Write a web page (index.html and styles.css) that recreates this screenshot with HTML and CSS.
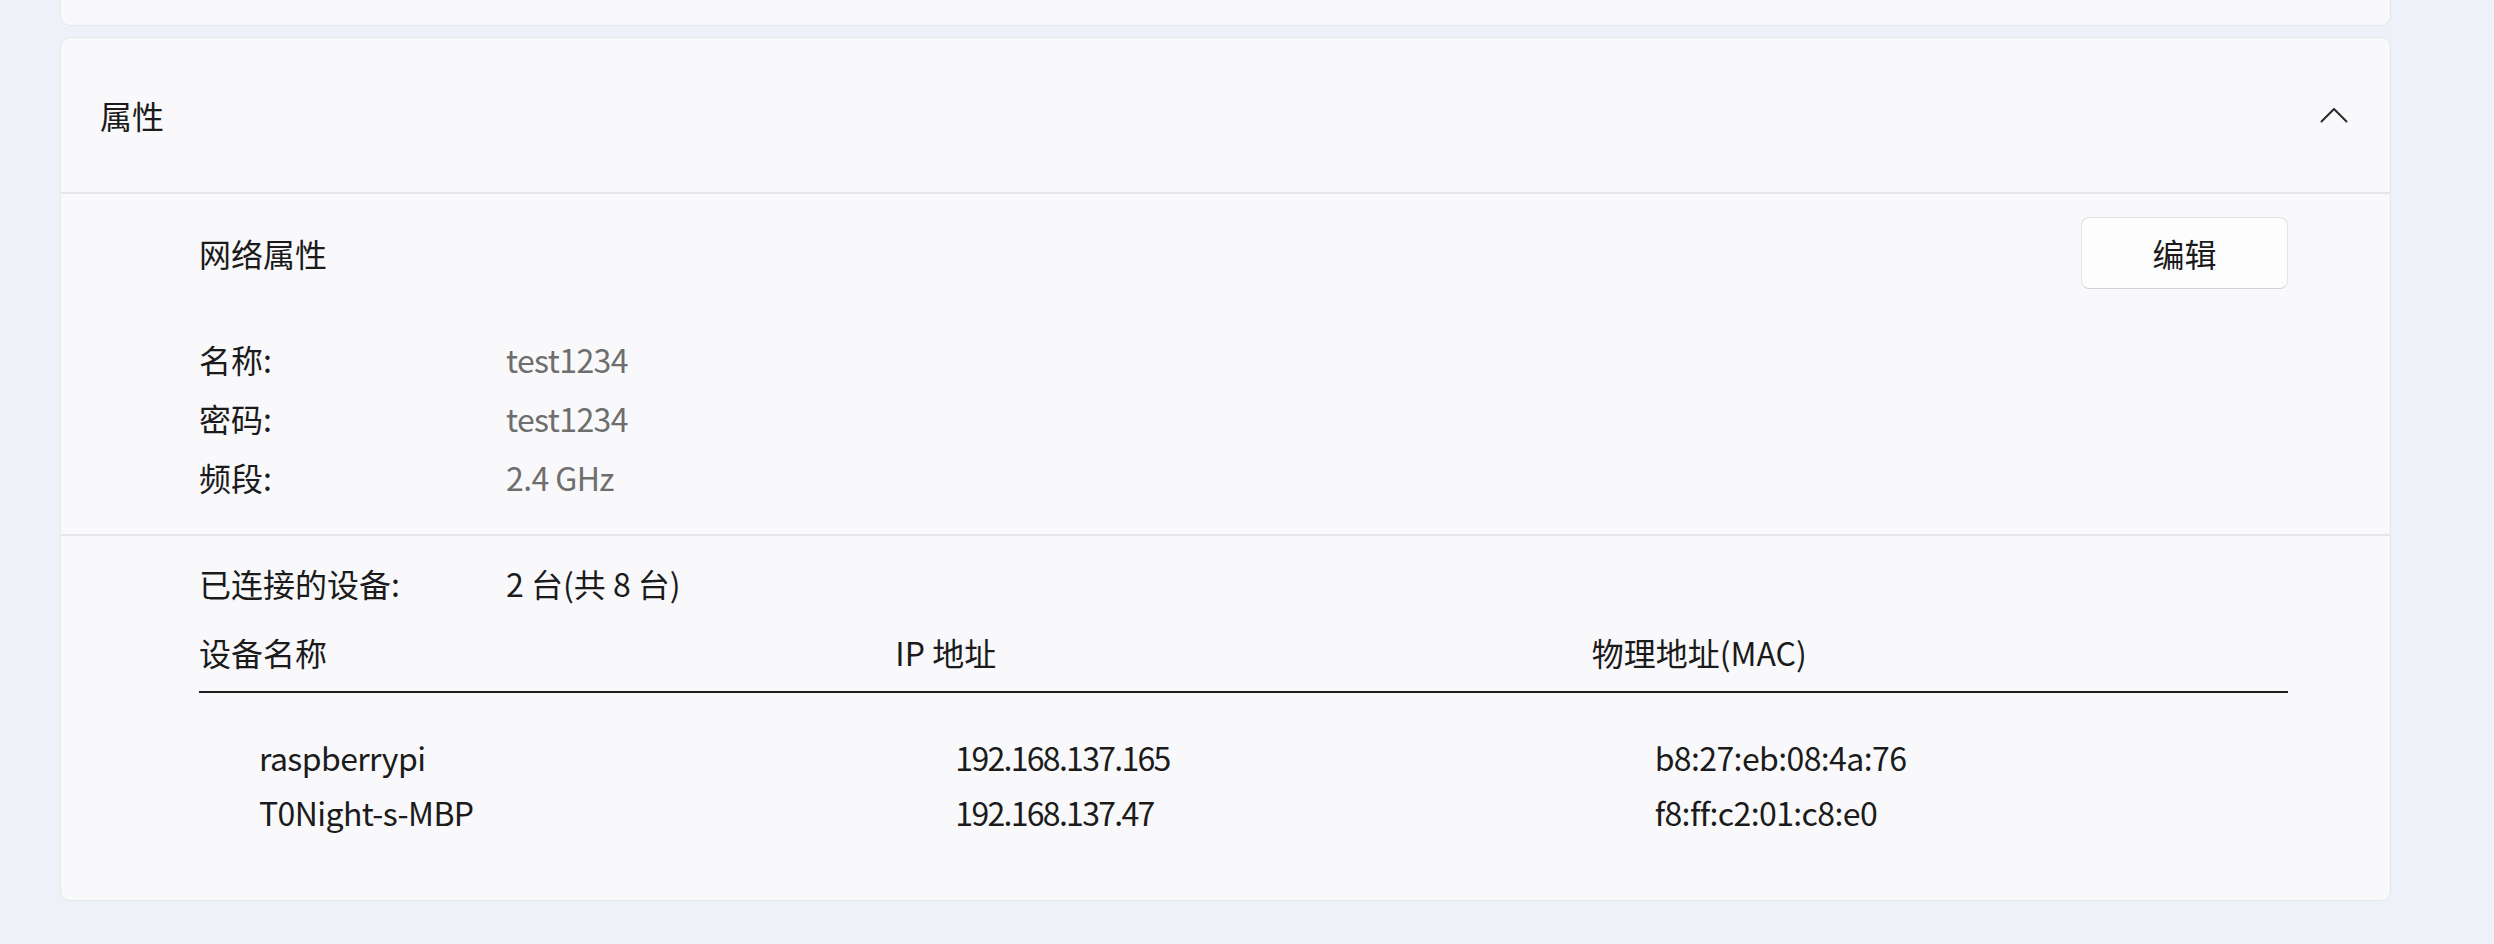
FILE: index.html
```html
<!DOCTYPE html>
<html lang="zh-CN">
<head>
<meta charset="utf-8">
<title>属性</title>
<link rel="stylesheet" href="styles.css">
</head>
<body>
<div class="page">
  <div class="card card-prev"></div>
  <div class="card">
    <div class="card-head">
      <span class="card-title">属性</span>
      <svg class="chevron" width="28" height="16" viewBox="0 0 28 16" aria-hidden="true">
        <path d="M1.5 14.5 L14 2 L26.5 14.5" fill="none" stroke="#2b2b2b" stroke-width="2" stroke-linecap="round" stroke-linejoin="round"/>
      </svg>
    </div>
    <div class="section section-net">
      <div class="section-head">
        <span>网络属性</span>
        <button class="btn">编辑</button>
      </div>
      <div class="kv">
        <span class="k">名称:</span><span class="v muted">test1234</span>
        <span class="k">密码:</span><span class="v muted">test1234</span>
        <span class="k">频段:</span><span class="v muted">2.4 GHz</span>
      </div>
    </div>
    <div class="section section-dev">
      <div class="kv">
        <span class="k">已连接的设备:</span><span class="v">2 台(共 8 台)</span>
      </div>
      <div class="table">
        <div class="thead">
          <span>设备名称</span><span>IP 地址</span><span>物理地址(MAC)</span>
        </div>
        <div class="tbody">
          <span class="c-name">raspberrypi</span><span class="c-ip">192.168.137.165</span><span class="c-mac">b8:27:eb:08:4a:76</span>
          <span class="c-name">T0Night-s-MBP</span><span class="c-ip">192.168.137.47</span><span class="c-mac">f8:ff:c2:01:c8:e0</span>
        </div>
      </div>
    </div>
  </div>
</div>
</body>
</html>
```

FILE: styles.css
```css
* { box-sizing: border-box; }
html, body {
  margin: 0;
  padding: 0;
  background: #eef1f7;
}
body {
  font-family: "Noto Sans CJK SC", "Noto Sans", sans-serif;
  font-size: 32px;
  color: #1b1b1b;
  width: 2494px;
  height: 944px;
  overflow: hidden;
}
.page {
  display: flex;
  flex-direction: column;
  gap: 11px;
  padding: 0 103px 0 60px;
}
.card {
  background: #f9f9fb;
  border: 1px solid #e6e7eb;
  border-radius: 10px;
}
.card-prev {
  height: 26px;
  border-top: none;
  border-radius: 0 0 10px 10px;
}
.card-head {
  height: 156px;
  display: flex;
  align-items: center;
  justify-content: space-between;
  padding: 0 42px 0 39px;
  border-bottom: 2px solid #e6e6e8;
}
.card-title {
  line-height: 40px;
}
.chevron { display: block; }
.section {
  padding-left: 138px;
  padding-right: 102px;
}
.section-net {
  padding-top: 23px;
  padding-bottom: 27px;
  border-bottom: 2px solid #e6e6e8;
}
.section-head {
  display: flex;
  align-items: center;
  justify-content: space-between;
  height: 72px;
  margin-bottom: 41px;
}
.btn {
  width: 207px;
  height: 72px;
  font: inherit;
  color: #1b1b1b;
  background: #fdfdfd;
  border: 1px solid #e2e2e4;
  border-bottom-color: #d2d2d4;
  border-radius: 8px;
  padding: 0;
}
.kv {
  display: grid;
  grid-template-columns: 307px 1fr;
  line-height: 59px;
}
.muted {
  color: #6e6e6e;
  letter-spacing: -0.6px;
}
.section-dev {
  padding-top: 18px;
  padding-bottom: 60px;
}
.table {
  margin-top: 14px;
}
.thead, .tbody {
  display: grid;
  grid-template-columns: 1fr 1fr 1fr;
}
.thead {
  line-height: 50px;
  padding-bottom: 14px;
  border-bottom: 2px solid #1f1f1f;
}
.tbody {
  padding-top: 37px;
  line-height: 55px;
}
.tbody span { padding-left: 60px; }
.c-name { letter-spacing: -0.6px; }
.c-ip { letter-spacing: -1.7px; }
.tbody .c-mac {
  padding-left: 63px;
  letter-spacing: -0.6px;
}
```
